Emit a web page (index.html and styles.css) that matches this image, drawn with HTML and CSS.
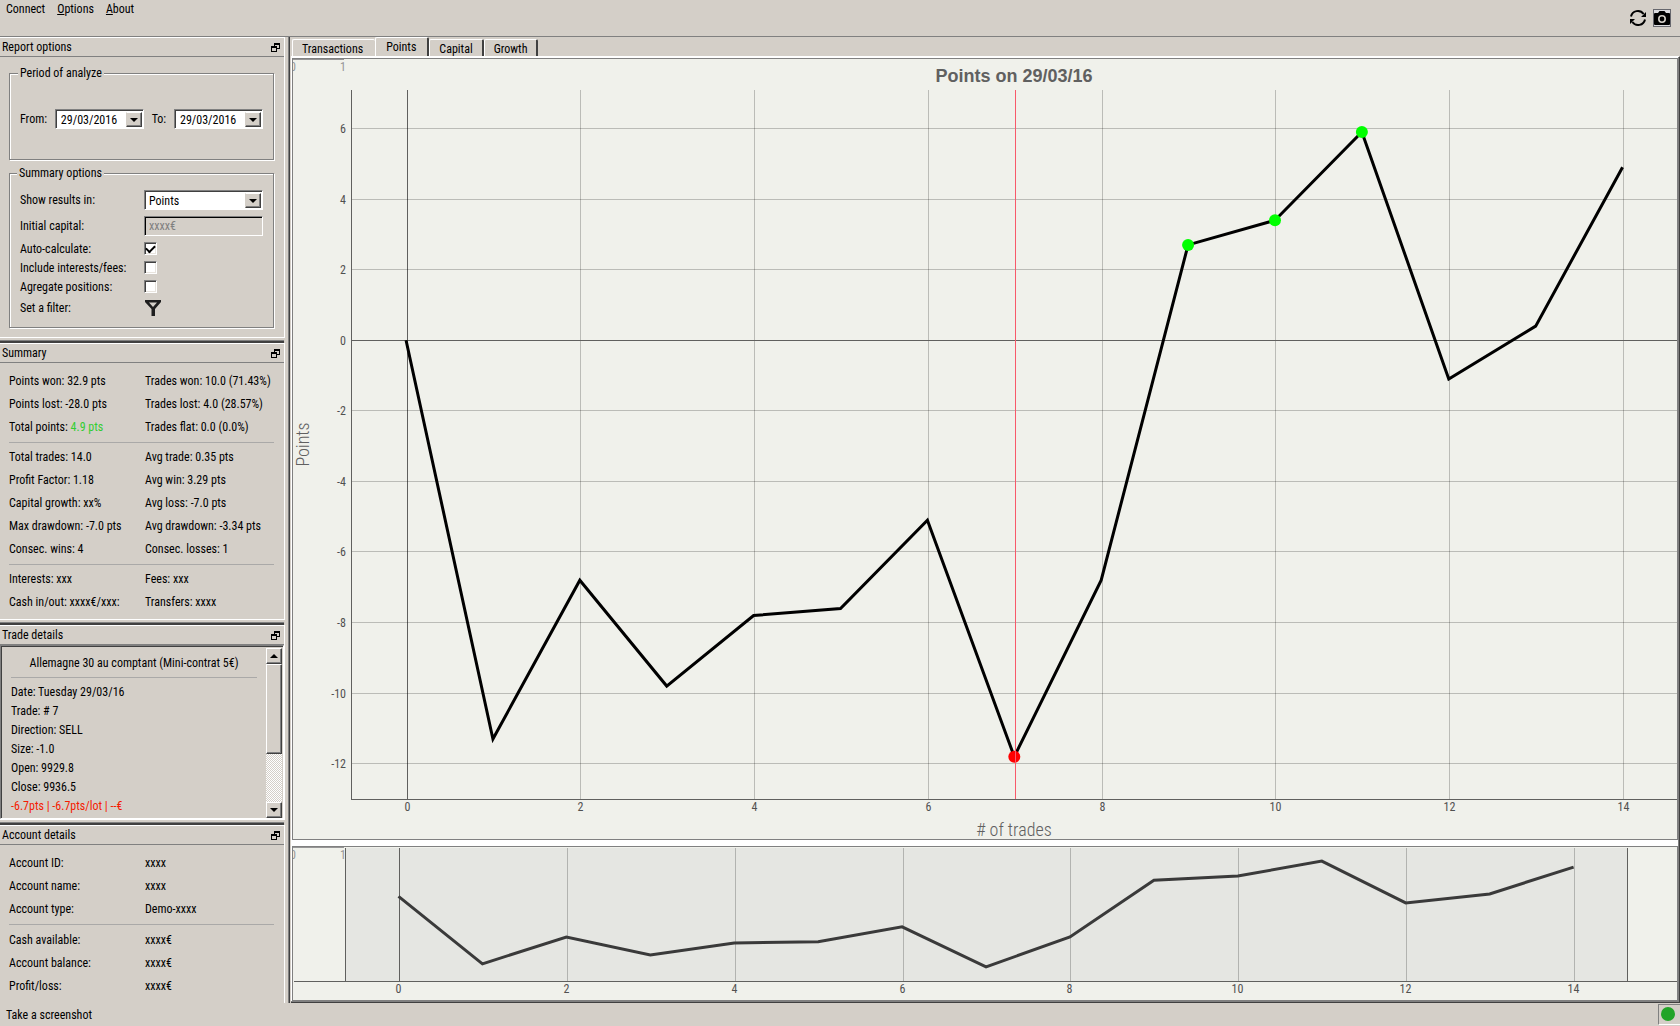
FILE: index.html
```
<!DOCTYPE html>
<html lang="en">
<head>
    <meta charset="UTF-8">
    <meta name="viewport" content="width=device-width, initial-scale=1.0">
    <title>Trading report</title>
    <link rel="stylesheet" href="styles.css">
</head>
<body>

<header class="topbar">
    <nav class="menu">
        <a href="#">Connect</a>
        <a href="#"><u>O</u>ptions</a>
        <a href="#"><u>A</u>bout</a>
    </nav>
    <div class="tools">
        <button class="tool" aria-label="Refresh">
            <svg width="18" height="18" viewBox="0 0 18 18" fill="none" stroke="#000" stroke-width="2">
                <path d="M2 7.5A7 7 0 0 1 14.6 5M16 10.5A7 7 0 0 1 3.4 13"/>
                <path d="M17 3v5h-5zM1 15v-5h5z" fill="#000" stroke="none"/>
            </svg>
        </button>
        <button class="tool active" aria-label="Take a screenshot">
            <svg width="16" height="16" viewBox="0 0 16 16">
                <path d="M0 4q0-1 1-1h3l1.500-2h5L12 3h3q1 0 1 1v10q0 1-1 1H1q-1 0-1-1z"/>
                <circle cx="8" cy="9" r="3.200" fill="none" stroke="#d4cfc8" stroke-width="1.600"/>
            </svg>
        </button>
    </div>
</header>

<div class="workspace">
    <aside class="sidebar">

        <!-- Report options -->
        <section class="dock">
            <h2 class="dock-title">Report options
                <button class="float-btn" aria-label="Float report options"><svg width="9" height="9" viewBox="0 0 9 9"><path d="M3 0h6v6H6v3H0V3h3zM4 2v1h2v2h2V2zM1 5v3h4V5z" fill-rule="evenodd"/></svg></button>
            </h2>
            <div class="options">
                <fieldset class="group period">
                    <legend>Period of analyze</legend>
                    <label for="from">From:</label>
                    <span class="combo"><input id="from" type="text" value="29/03/2016"><button class="arrow" aria-label="Pick start date"></button></span>
                    <label for="to">To:</label>
                    <span class="combo"><input id="to" type="text" value="29/03/2016"><button class="arrow" aria-label="Pick end date"></button></span>
                </fieldset>
                <fieldset class="group">
                    <legend>Summary options</legend>
                    <div class="field tall">
                        <label for="results">Show results in:</label>
                        <span class="combo"><select id="results"><option>Points</option></select><span class="arrow"></span></span>
                    </div>
                    <div class="field tall">
                        <label for="capital">Initial capital:</label>
                        <input class="capital" id="capital" type="text" value="xxxx€" disabled>
                    </div>
                    <div class="field">
                        <label for="auto">Auto-calculate:</label>
                        <input class="check" id="auto" type="checkbox" checked>
                    </div>
                    <div class="field">
                        <label for="fees">Include interests/fees:</label>
                        <input class="check" id="fees" type="checkbox">
                    </div>
                    <div class="field">
                        <label for="agregate">Agregate positions:</label>
                        <input class="check" id="agregate" type="checkbox">
                    </div>
                    <div class="field filter">
                        <label for="filter">Set a filter:</label>
                        <button class="filter-btn" id="filter"><svg width="16" height="16" viewBox="0 0 16 16"><path d="M0 0h16v2L10 9v7H6.500V9L0 2zM4 2.500l4 4.500 4-4.500z" fill="#1e1e1e" fill-rule="evenodd"/></svg></button>
                    </div>
                </fieldset>
            </div>
        </section>

        <!-- Summary -->
        <section class="dock">
            <h2 class="dock-title">Summary
                <button class="float-btn" aria-label="Float summary"><svg width="9" height="9" viewBox="0 0 9 9"><path d="M3 0h6v6H6v3H0V3h3zM4 2v1h2v2h2V2zM1 5v3h4V5z" fill-rule="evenodd"/></svg></button>
            </h2>
            <div class="stats">
                <div class="row"><span>Points won: 32.9 pts</span><span>Trades won: 10.0 (71.43%)</span></div>
                <div class="row"><span>Points lost: -28.0 pts</span><span>Trades lost: 4.0 (28.57%)</span></div>
                <div class="row"><span>Total points: <span class="gain">4.9 pts</span></span><span>Trades flat: 0.0 (0.0%)</span></div>
                <hr>
                <div class="row"><span>Total trades: 14.0</span><span>Avg trade: 0.35 pts</span></div>
                <div class="row"><span>Profit Factor: 1.18</span><span>Avg win: 3.29 pts</span></div>
                <div class="row"><span>Capital growth: xx%</span><span>Avg loss: -7.0 pts</span></div>
                <div class="row"><span>Max drawdown: -7.0 pts</span><span>Avg drawdown: -3.34 pts</span></div>
                <div class="row"><span>Consec. wins: 4</span><span>Consec. losses: 1</span></div>
                <hr>
                <div class="row"><span>Interests: xxx</span><span>Fees: xxx</span></div>
                <div class="row"><span>Cash in/out: xxxx€/xxx:</span><span>Transfers: xxxx</span></div>
            </div>
        </section>

        <!-- Trade details -->
        <section class="dock">
            <h2 class="dock-title">Trade details
                <button class="float-btn" aria-label="Float trade details"><svg width="9" height="9" viewBox="0 0 9 9"><path d="M3 0h6v6H6v3H0V3h3zM4 2v1h2v2h2V2zM1 5v3h4V5z" fill-rule="evenodd"/></svg></button>
            </h2>
            <div class="trade">
                <div class="trade-text">
                    <p class="market">Allemagne 30 au comptant (Mini-contrat 5€)</p>
                    <hr>
                    <p>Date: Tuesday 29/03/16</p>
                    <p>Trade: # 7</p>
                    <p>Direction: SELL</p>
                    <p>Size: -1.0</p>
                    <p>Open: 9929.8</p>
                    <p>Close: 9936.5</p>
                    <p class="loss">-6.7pts | -6.7pts/lot | --€</p>
                </div>
                <div class="scrollbar">
                    <button class="scroll-btn up" aria-label="Scroll up"></button>
                    <div class="thumb"></div>
                    <div class="track"></div>
                    <button class="scroll-btn" aria-label="Scroll down"></button>
                </div>
            </div>
        </section>

        <!-- Account details -->
        <section class="dock last">
            <h2 class="dock-title">Account details
                <button class="float-btn" aria-label="Float account details"><svg width="9" height="9" viewBox="0 0 9 9"><path d="M3 0h6v6H6v3H0V3h3zM4 2v1h2v2h2V2zM1 5v3h4V5z" fill-rule="evenodd"/></svg></button>
            </h2>
            <div class="stats account">
                <div class="row"><span>Account ID:</span><span>xxxx</span></div>
                <div class="row"><span>Account name:</span><span>xxxx</span></div>
                <div class="row"><span>Account type:</span><span>Demo-xxxx</span></div>
                <hr>
                <div class="row"><span>Cash available:</span><span>xxxx€</span></div>
                <div class="row"><span>Account balance:</span><span>xxxx€</span></div>
                <div class="row"><span>Profit/loss:</span><span>xxxx€</span></div>
            </div>
        </section>
    </aside>

    <main class="main">
        <div class="tabs" role="tablist">
            <button class="tab" role="tab">Transactions</button>
            <button class="tab selected" role="tab" aria-selected="true">Points</button>
            <button class="tab" role="tab">Capital</button>
            <button class="tab" role="tab">Growth</button>
        </div>
        <div class="charts">
            <div class="chart big"><svg id="mainChart"></svg></div>
            <div class="chart small"><svg id="overviewChart"></svg></div>
        </div>
    </main>
</div>

<footer class="statusbar">
    <span>Take a screenshot</span>
    <span class="led"><svg width="14" height="14" viewBox="0 0 14 14"><circle cx="7" cy="7" r="7" fill="#21a428"/></svg></span>
</footer>

<script src="charts.js"></script>
</body>
</html>
```

FILE: styles.css
```
* {
    box-sizing: border-box;
}

body {
    font-family: "Roboto Condensed", "Liberation Sans", sans-serif;
    font-size: 12px;
    line-height: 16px;
    color: #000;
    background-color: #d4cfc8;
    margin: 0;
    min-height: 100vh;
    display: flex;
    flex-direction: column;
}

button, input, select {
    font: inherit;
    color: inherit;
    margin: 0;
    padding: 0;
    border: none;
    border-radius: 0;
    background: none;
    outline: none;
    appearance: none;
}

svg {
    display: block;
}

p {
    margin: 0;
}

hr {
    height: 1px;
    margin: 3px 0;
    border: none;
    background-color: #aaa9a8;
}

/* Top bar */
.topbar {
    display: flex;
    justify-content: space-between;
    height: 37px;
    border-bottom: 1px solid #808080;
}

.menu {
    display: flex;
    gap: 12px;
    padding: 1px 6px;
}

.menu a {
    color: #000;
    text-decoration: none;
}

.tools {
    display: flex;
    align-items: center;
    gap: 6px;
    padding-right: 9px;
}

.tool.active {
    border: 1px solid #66676d;
    background-color: #dcdcdf;
}

.workspace {
    display: flex;
    flex: 1;
}

/* Docks on the left */
.sidebar {
    display: flex;
    flex-direction: column;
    width: 285px;
    flex-shrink: 0;
}

.dock {
    border-top: 1px solid #fff;
    border-right: 1px solid #fff;
    border-bottom: 1px solid #fff;
    margin-bottom: 5px;
    position: relative;
}

.dock::after {
    content: "";
    position: absolute;
    left: 0;
    right: 0;
    bottom: -6px;
    height: 2px;
    background-color: #404040;
    border-top: 1px solid #808080;
}

.dock.last {
    flex: 1;
    margin-bottom: 0;
    border-bottom: none;
}

.dock.last::after {
    display: none;
}

.dock-title {
    display: flex;
    align-items: center;
    justify-content: space-between;
    height: 19px;
    margin: 0;
    padding: 0 4px 0 2px;
    font-size: 12px;
    font-weight: normal;
    border-bottom: 1px solid #808080;
}

.float-btn {
    display: flex;
}

.options {
    padding: 8px 10px 4px 9px;
}

.group {
    margin: 0 0 5px;
    padding: 6px 10px 7px 9px;
    border: 1px solid #808080;
    box-shadow: inset 1px 1px #fff, 1px 1px #fff;
    min-width: 0;
}

.group legend {
    padding: 0 2px;
    margin-left: -2px;
    background-color: #d4cfc8;
}

.period {
    display: flex;
    align-items: center;
    justify-content: space-between;
    padding: 28px 10px 30px;
}

.combo {
    display: flex;
    height: 20px;
    border: 1px solid #808080;
    border-right-color: #fff;
    border-bottom-color: #fff;
    background-color: #fff;
    box-shadow: inset 1px 1px #404040;
    padding: 2px 1px 1px 2px;
}

.period .combo {
    width: 89px;
}

.combo input, .combo select {
    flex: 1;
    min-width: 0;
    padding-left: 3px;
}

.combo select {
    padding-left: 2px;
}

.arrow {
    display: flex;
    align-items: center;
    justify-content: center;
    width: 16px;
    background-color: #d4cfc8;
    border: 1px solid #fff;
    border-left-color: #d4cfc8;
    border-right-color: #404040;
    border-bottom-color: #404040;
    box-shadow: inset -1px -1px #808080;
}

.arrow::before, .scroll-btn::before {
    content: "";
    border: 4px solid transparent;
    border-top-color: #000;
    border-bottom: none;
}

.field {
    display: grid;
    grid-template-columns: 124px 1fr;
    align-items: center;
    height: 19px;
    padding-left: 1px;
}

.field.tall {
    height: 26px;
}

.field.filter {
    height: 24px;
}

.capital {
    height: 20px;
    padding-left: 4px;
    border: 1px solid #808080;
    border-right-color: #fff;
    border-bottom-color: #fff;
    box-shadow: inset 1px 1px #000;
    color: #808080;
    width: 100%;
}

.check {
    display: flex;
    align-items: center;
    justify-content: center;
    width: 13px;
    height: 13px;
    background-color: #fff;
    border: 1px solid #808080;
    border-right-color: #fff;
    border-bottom-color: #fff;
    box-shadow: inset 1px 1px #404040, inset -1px -1px #e8e4de;
}

.check:checked::before {
    content: "";
    width: 7px;
    height: 4px;
    border-left: 2px solid #000;
    border-bottom: 2px solid #000;
    transform: rotate(-45deg);
    margin-bottom: 2px;
}

.filter-btn {
    display: flex;
    padding-left: 1px;
}

/* Summary and account figures */
.stats {
    padding: 7px 10px 5px 9px;
}

.row {
    display: grid;
    grid-template-columns: 136px 1fr;
    line-height: 23px;
    white-space: nowrap;
}

.account hr {
    margin-bottom: 4px;
}

.gain {
    color: #32cd32;
}

.loss {
    color: #f51b00;
}

/* Trade details */
.trade {
    display: flex;
    border: 1px solid #808080;
    border-right-color: #fff;
    border-bottom-color: #fff;
    box-shadow: inset 1px 1px #404040;
    padding: 2px 1px 0 2px;
}

.trade-text {
    flex: 1;
    padding: 6px 9px 2px 8px;
    line-height: 19px;
}

.trade-text hr {
    margin: 4px 0 5px;
}

.market {
    text-align: center;
}

.scrollbar {
    display: flex;
    flex-direction: column;
    width: 16px;
}

.scroll-btn, .thumb {
    border: 1px solid #fff;
    border-right-color: #404040;
    border-bottom-color: #404040;
    box-shadow: inset -1px -1px #808080;
}

.scroll-btn {
    display: flex;
    align-items: center;
    justify-content: center;
    height: 16px;
}

.scroll-btn.up::before {
    transform: rotate(180deg);
}

.thumb {
    height: 90px;
}

.track {
    flex: 1;
    background: repeating-conic-gradient(#fff 0 25%, #d4cfc8 0 50%) 0 0 / 2px 2px;
}

/* Tabs and charts */
.main {
    flex: 1;
    min-width: 0;
    display: flex;
    flex-direction: column;
    margin-left: 3px;
    border-left: 1px solid #808080;
    box-shadow: inset 1px 0 #404040;
    padding-left: 2px;
}

.tabs {
    display: flex;
    align-items: flex-end;
    height: 19px;
    padding-left: 1px;
}

.tab {
    height: 17px;
    padding: 0 9px;
    border-top: 1px solid #fff;
    border-left: 1px solid #fff;
    border-right: 2px solid #404040;
    border-radius: 2px 2px 0 0;
    line-height: 18px;
}

.tab:first-child {
    border-right: none;
    padding-right: 12px;
}

.tab.selected {
    height: 19px;
    padding: 0 11px 0 10px;
}

.charts {
    flex: 1;
    display: flex;
    flex-direction: column;
    gap: 6px;
    background-color: #fff;
    border-top: 1px solid #fff;
    border-right: 1px solid #404040;
    border-bottom: 1px solid #404040;
    padding-top: 1px;
    padding-left: 1px;
    box-shadow: inset -1px -1px #808080;
}

.chart {
    position: relative;
    background-color: #f0f1eb;
    border: 1px solid #808080;
    border-right-width: 2px;
}

/* svg is taken out of flow so that it follows the size of its panel */
.chart svg {
    position: absolute;
    inset: 0;
    width: 100%;
    height: 100%;
}

.chart.big {
    flex: 1;
}

.chart.small {
    height: 156px;
    border-bottom-width: 2px;
}

.grid {
    stroke: #000;
    stroke-opacity: 0.22;
}

.axis {
    stroke: #60605e;
}

.ghost {
    stroke: #969696;
}

.cursor {
    stroke: #f8596a;
}

.tick {
    fill: #505050;
    font-size: 12px;
}

.ghost-text {
    fill: #969696;
    font-size: 12px;
}

.axis-label {
    fill: #606060;
    font-size: 18px;
    font-weight: 300;
}

.chart-title {
    fill: #606060;
    font-family: "Liberation Sans", Arial, sans-serif;
    font-size: 18px;
    font-weight: bold;
}

.curve {
    fill: none;
    stroke: #000;
    stroke-width: 3;
}

.overview-curve {
    fill: none;
    stroke: #3a3a3a;
    stroke-width: 3;
}

.region {
    fill: #e5e6e2;
}

.win {
    fill: #0f0;
}

.lose {
    fill: #f00;
}

/* Status bar */
.statusbar {
    display: flex;
    align-items: center;
    justify-content: space-between;
    height: 23px;
    padding-left: 6px;
}

.led {
    padding: 2px 5px 3px 2px;
    border: 1px solid #808080;
    border-right: none;
    border-bottom-color: #fff;
}
```

FILE: charts.js
```
const points = [0, -11.3, -6.8, -9.8, -7.8, -7.6, -5.1, -11.8, -6.8, 2.7, 3.4, 5.9, -1.1, 0.4, 4.9];
const winners = [9, 10, 11];
const worst = 7;
const visibleRange = [-0.645, 14.63];

function add(svg, name, attrs, text) {
    const el = document.createElementNS('http://www.w3.org/2000/svg', name);
    for (const key in attrs) {
        el.setAttribute(key, attrs[key]);
    }
    if (text !== undefined) {
        el.textContent = text;
    }
    svg.appendChild(el);
}

function line(svg, cls, x1, y1, x2, y2) {
    add(svg, 'line', { class: cls, x1: x1, y1: y1, x2: x2, y2: y2 });
}

// Lines one pixel wide are sharp on half pixels
function snap(v) {
    return Math.floor(v) + 0.5;
}

function scales(box, range) {
    return {
        x: v => box.left + (v - range.x0) / (range.x1 - range.x0) * (box.right - box.left),
        y: v => box.bottom - (v - range.y0) / (range.y1 - range.y0) * (box.bottom - box.top)
    };
}

function curve(svg, cls, s) {
    const list = points.map((p, i) => (s.x(i) - 1) + ',' + s.y(p)).join(' ');
    add(svg, 'polyline', { class: cls, points: list });
}

// Unused default axes in the corner of each plot
function ghostAxes(svg) {
    line(svg, 'ghost', 0, 0.5, 51, 0.5);
    add(svg, 'text', { class: 'ghost-text', x: 0, y: 12, 'text-anchor': 'middle' }, '0');
    add(svg, 'text', { class: 'ghost-text', x: 50, y: 12, 'text-anchor': 'middle' }, '1');
}

function drawMain() {
    const svg = document.getElementById('mainChart');
    const w = svg.clientWidth;
    const h = svg.clientHeight;
    const box = { left: 58, top: 31, right: w, bottom: h - 40 };
    const s = scales(box, { x0: -0.645, x1: 14.615, y0: -13, y1: 7.09 });
    svg.innerHTML = '';

    ghostAxes(svg);
    for (let i = 0; i <= 14; i += 2) {
        const x = snap(s.x(i));
        line(svg, i === 0 ? 'axis' : 'grid', x, box.top, x, box.bottom);
        add(svg, 'text', { class: 'tick', x: x, y: box.bottom + 12, 'text-anchor': 'middle' }, i);
    }
    for (let v = -12; v <= 6; v += 2) {
        const y = snap(s.y(v));
        line(svg, v === 0 ? 'axis' : 'grid', box.left, y, box.right, y);
        add(svg, 'text', { class: 'tick', x: box.left - 5, y: y + 4, 'text-anchor': 'end' }, v);
    }
    line(svg, 'axis', snap(box.left), box.top, snap(box.left), box.bottom);
    line(svg, 'axis', box.left, snap(box.bottom), box.right, snap(box.bottom));

    curve(svg, 'curve', s);
    winners.forEach(i => add(svg, 'circle', { class: 'win', cx: s.x(i) - 1, cy: s.y(points[i]), r: 6 }));
    add(svg, 'circle', { class: 'lose', cx: s.x(worst) - 1, cy: s.y(points[worst]), r: 6 });
    line(svg, 'cursor', snap(s.x(worst)), box.top, snap(s.x(worst)), box.bottom);

    const middle = (box.left + box.right) / 2;
    add(svg, 'text', { class: 'chart-title', x: middle, y: 23, 'text-anchor': 'middle' }, 'Points on 29/03/16');
    add(svg, 'text', { class: 'axis-label', x: middle, y: h - 3, 'text-anchor': 'middle' }, '# of trades');
    const side = (box.top + box.bottom) / 2;
    add(svg, 'text', { class: 'axis-label', x: 0, y: 0, 'text-anchor': 'middle', transform: 'translate(16 ' + side + ') rotate(-90)' }, 'Points');
}

function drawOverview() {
    const svg = document.getElementById('overviewChart');
    const w = svg.clientWidth;
    const h = svg.clientHeight;
    const box = { left: 1, top: 1, right: w, bottom: h - 19 };
    const s = scales(box, { x0: -1.257, x1: 15.22, y0: -14.17, y1: 8.09 });
    const start = snap(s.x(visibleRange[0]));
    const end = snap(s.x(visibleRange[1]));
    svg.innerHTML = '';

    add(svg, 'rect', { class: 'region', x: start, y: box.top, width: end - start, height: box.bottom - box.top });
    ghostAxes(svg);
    for (let i = 0; i <= 14; i += 2) {
        const x = snap(s.x(i));
        line(svg, i === 0 ? 'axis' : 'grid', x, box.top, x, box.bottom);
        add(svg, 'text', { class: 'tick', x: x - 1, y: box.bottom + 12, 'text-anchor': 'middle' }, i);
    }
    line(svg, 'axis', start, box.top, start, box.bottom);
    line(svg, 'axis', end, box.top, end, box.bottom);
    line(svg, 'axis', box.left, snap(box.bottom), box.right, snap(box.bottom));
    curve(svg, 'overview-curve', s);
}

function draw() {
    drawMain();
    drawOverview();
}

window.addEventListener('resize', draw);
draw();
```
